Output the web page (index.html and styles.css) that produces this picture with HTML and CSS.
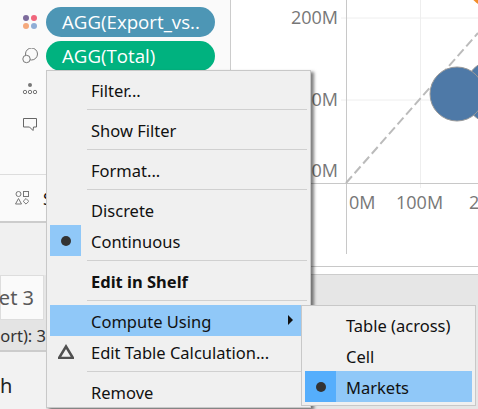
FILE: index.html
```html
<!DOCTYPE html>
<html lang="en">
<head>
    <meta charset="UTF-8">
    <meta name="viewport" content="width=device-width, initial-scale=1.0">
    <title>Worksheet</title>
    <link rel="stylesheet" href="styles.css">
</head>
<body>
    <div class="app">
        <div class="workspace">
            <aside class="sidebar">
                <section class="marks">
                    <div class="mark-row">
                        <svg class="mark-icon" viewBox="0 0 16 16">
                            <circle cx="4" cy="4" r="3" fill="#7d6b9c"/>
                            <circle cx="12" cy="4" r="3" fill="#f0667c"/>
                            <circle cx="4" cy="12" r="3" fill="#f5a97c"/>
                            <circle cx="12" cy="12" r="3" fill="#8fadd6"/>
                        </svg>
                        <div class="pill pill-blue">AGG(Export_vs..</div>
                    </div>
                    <div class="mark-row">
                        <svg class="mark-icon" viewBox="0 0 16 16">
                            <circle cx="9.5" cy="6" r="6" fill="none" stroke="#777"/>
                            <circle cx="4.5" cy="11" r="3.7" fill="#fafafa" stroke="#777"/>
                        </svg>
                        <div class="pill pill-green">AGG(Total)</div>
                    </div>
                    <div class="mark-row">
                        <svg class="mark-icon" viewBox="0 0 16 16">
                            <circle cx="8" cy="3" r="2" fill="#777"/>
                            <circle cx="3" cy="10" r="1.7" fill="none" stroke="#777"/>
                            <circle cx="8" cy="10" r="1.7" fill="none" stroke="#777"/>
                            <circle cx="13" cy="10" r="1.7" fill="none" stroke="#777"/>
                        </svg>
                    </div>
                    <div class="mark-row">
                        <svg class="mark-icon" viewBox="0 0 16 16">
                            <path d="M1.5 2.5h13v8.500h-3l-.5 3.500-3.500-3.500h-6z" fill="none" stroke="#666"/>
                        </svg>
                    </div>
                </section>
                <section class="show-row">
                    <svg class="show-icon" viewBox="0 0 14 14">
                        <circle cx="3.500" cy="3" r="2.500" fill="none" stroke="#777"/>
                        <rect x="8.500" y="0.500" width="5" height="5" fill="none" stroke="#777"/>
                        <path d="M3.500 7.500l3 5.500h-6z" fill="none" stroke="#777"/>
                        <path d="M11 7.500l2.800 2.800-2.800 2.800-2.800-2.800z" fill="none" stroke="#777"/>
                    </svg>
                    <span class="show-label">S</span>
                </section>
            </aside>
            <main class="chart">
                <svg class="plot" viewBox="231 0 247 275">
                    <path class="grid" d="M341 18H478M341 100H478M420.500 0V188"/>
                    <path class="axis" d="M346.500 0V254M231 183.500H478M231 266.500H478"/>
                    <path class="trend" d="M346 183L478 33"/>
                    <circle class="dot-orange" cx="497" cy="-23" r="33"/>
                    <circle class="dot-blue" cx="497" cy="92" r="33"/>
                    <circle class="dot-blue" cx="457" cy="94" r="27"/>
                    <text class="tick" x="338" y="24" text-anchor="end">200M</text>
                    <text class="tick" x="338" y="106" text-anchor="end">100M</text>
                    <text class="tick" x="338" y="177" text-anchor="end">0M</text>
                    <text class="tick" x="349" y="209">0M</text>
                    <text class="tick" x="396" y="209">100M</text>
                    <text class="tick" x="469" y="209">200M</text>
                </svg>
            </main>
        </div>
        <div class="tabs">
            <div class="tab"><span>Sheet 3</span></div>
        </div>
        <div class="status"><span>Export): 3</span></div>
        <div class="footer">
            <div class="footer-left">h</div>
        </div>
    </div>

    <div class="menu main-menu">
        <div class="item"><span class="check"></span><span>Filter...</span></div>
        <div class="sep"></div>
        <div class="item"><span class="check"></span><span>Show Filter</span></div>
        <div class="sep"></div>
        <div class="item"><span class="check"></span><span>Format...</span></div>
        <div class="sep"></div>
        <div class="item"><span class="check"></span><span>Discrete</span></div>
        <div class="item"><span class="check check-on"><i class="dot"></i></span><span>Continuous</span></div>
        <div class="sep"></div>
        <div class="item item-bold"><span class="check"></span><span>Edit in Shelf</span></div>
        <div class="sep"></div>
        <div class="item item-active"><span class="check"></span><span>Compute Using</span><i class="arrow"></i></div>
        <div class="item">
            <span class="check">
                <svg class="delta" viewBox="0 0 16 15"><path d="M8 2.500L15 14H1z" fill="none" stroke="#505050" stroke-width="2.500"/></svg>
            </span>
            <span>Edit Table Calculation...</span>
        </div>
        <div class="sep"></div>
        <div class="item"><span class="check"></span><span>Remove</span></div>
    </div>

    <div class="menu sub-menu">
        <div class="item"><span class="check"></span><span>Table (across)</span></div>
        <div class="item"><span class="check"></span><span>Cell</span></div>
        <div class="item item-active"><span class="check check-strong"><i class="dot"></i></span><span>Markets</span></div>
    </div>
</body>
</html>
```

FILE: styles.css
```css
* {
    box-sizing: border-box;
}
html, body {
    margin: 0;
    padding: 0;
    height: 100%;
    overflow: hidden;
}
body {
    font-family: "Noto Sans", Arial, sans-serif;
    font-size: 16.5px;
    color: #111;
    background: #e6e6e6;
    position: relative;
}
.app {
    display: flex;
    flex-direction: column;
    height: 409px;
}
.workspace {
    display: flex;
    height: 275px;
}
.sidebar {
    width: 231px;
    background: #f0f0f0;
    border-right: 1px solid #ccc;
}
.marks {
    height: 175px;
    padding-top: 7px;
    background: #fafafa;
    border-bottom: 1px solid #ddd;
    display: flex;
    flex-direction: column;
    gap: 4px;
}
.mark-row {
    display: flex;
    align-items: center;
    height: 30px;
    padding-left: 22px;
    gap: 8px;
}
.mark-icon {
    width: 16px;
    height: 16px;
    flex: none;
}
.pill {
    width: 169px;
    height: 30px;
    line-height: 29px;
    padding-left: 16px;
    border-radius: 15px;
    color: #fff;
    font-family: "Open Sans", sans-serif;
    font-size: 18.7px;
    white-space: nowrap;
    overflow: hidden;
}
.pill-blue {
    background: #4d96b5;
}
.pill-green {
    background: #00b27f;
}
.show-row {
    height: 48px;
    background: #fafafa;
    border-bottom: 2px solid #ccc;
    display: flex;
    align-items: center;
    padding-left: 15px;
    gap: 14px;
}
.show-icon {
    width: 14px;
    height: 14px;
    flex: none;
}
.chart {
    flex: 1;
    background: #fff;
    border-bottom: 1px solid #ccc;
}
.plot {
    display: block;
    width: 247px;
    height: 275px;
}
.grid {
    stroke: #eee;
    stroke-width: 1;
    fill: none;
}
.axis {
    stroke: #c8c8c8;
    stroke-width: 1;
    fill: none;
}
.trend {
    stroke: #bbb;
    stroke-width: 2;
    stroke-dasharray: 9 4;
    fill: none;
}
.dot-blue {
    fill: #4e79a7;
    stroke: #999;
    stroke-width: 1;
}
.dot-orange {
    fill: #f28e2b;
}
.tick {
    font-family: "Open Sans", sans-serif;
    font-size: 18px;
    fill: #777;
}
.tabs {
    height: 45px;
    background: #e6e6e6;
    display: flex;
}
.tab {
    width: 44px;
    height: 45px;
    background: #fafafa;
    border: 1px solid #ddd;
    color: #595959;
    font-size: 20px;
    display: flex;
    align-items: center;
    justify-content: flex-end;
    padding-right: 9px;
    white-space: nowrap;
}
.status {
    width: 46px;
    height: 32px;
    background: #e4e4e4;
    border-bottom: 2px solid #ccc;
    display: flex;
    align-items: center;
    justify-content: flex-end;
    white-space: nowrap;
    color: #333;
    font-size: 16.5px;
}
.footer {
    flex: 1;
    display: flex;
}
.footer-left {
    width: 46px;
    background: #f2f2f2;
    font-size: 20px;
    padding-top: 20px;
    color: #222;
}
.menu {
    position: absolute;
    background: #f0f0f0;
    border: 1px solid #c8c8c8;
    padding: 3px;
}
.main-menu {
    left: 46px;
    top: 70px;
    width: 265px;
    padding-bottom: 0;
    box-shadow: 3px 2px 3px rgba(0, 0, 0, 0.5);
}
.sub-menu {
    left: 301px;
    top: 305px;
    width: 175px;
}
.item {
    display: flex;
    align-items: center;
    height: 31px;
    position: relative;
    white-space: nowrap;
}
.check {
    width: 31px;
    height: 31px;
    margin-right: 10px;
    display: flex;
    align-items: center;
    justify-content: center;
    flex: none;
}
.check + span {
    padding-top: 2px;
}
.check-on {
    background: #90c8f8;
}
.check-strong {
    background: #55aefc;
}
.dot {
    width: 10px;
    height: 10px;
    border-radius: 50%;
    background: #333;
}
.delta {
    width: 16px;
    height: 15px;
}
.item-bold {
    font-weight: 700;
}
.item-active {
    background: #90c8f8;
}
.arrow {
    position: absolute;
    right: 14px;
    top: 10px;
    border-left: 5px solid #111;
    border-top: 5px solid transparent;
    border-bottom: 5px solid transparent;
}
.sep {
    height: 1px;
    margin: 4px 0 4px 37px;
    background: #d0d0d0;
}
```
